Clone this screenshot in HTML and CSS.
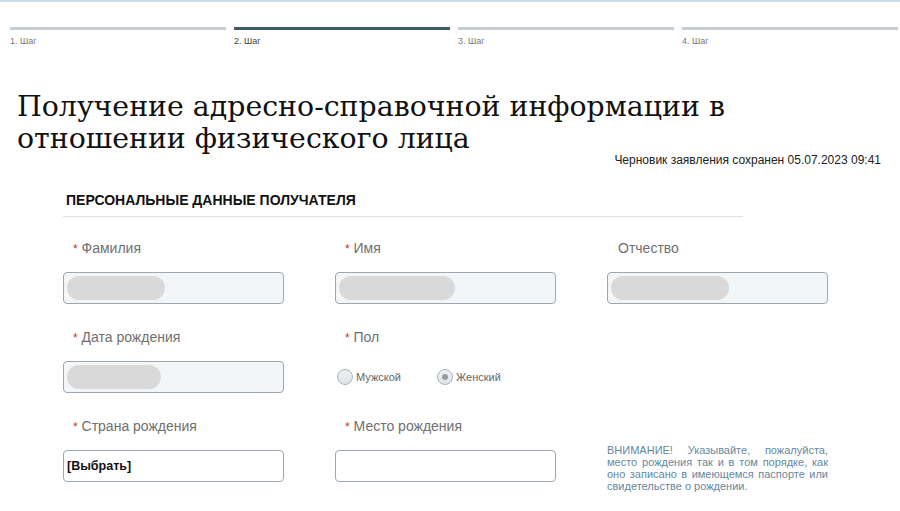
FILE: index.html
```html
<!DOCTYPE html>
<html lang="ru">
<head>
    <meta charset="UTF-8">
    <title>Получение адресно-справочной информации</title>
    <link rel="stylesheet" href="styles.css">
</head>
<body>

<div class="topline"></div>

<!-- Steps -->
<div class="steps">
    <div class="step">1. Шаг</div>
    <div class="step active">2. Шаг</div>
    <div class="step">3. Шаг</div>
    <div class="step">4. Шаг</div>
</div>

<h1 class="title">Получение адресно-справочной информации в отношении физического лица</h1>
<div class="draft">Черновик заявления сохранен 05.07.2023 09:41</div>

<div class="form">
    <div class="section-title">ПЕРСОНАЛЬНЫЕ ДАННЫЕ ПОЛУЧАТЕЛЯ</div>

    <div class="grid">
        <div class="field">
            <label><span class="req">*</span> Фамилия</label>
            <div class="input disabled"><span class="blur w98"></span></div>
        </div>
        <div class="field">
            <label><span class="req">*</span> Имя</label>
            <div class="input disabled"><span class="blur w116"></span></div>
        </div>
        <div class="field">
            <label class="plain">Отчество</label>
            <div class="input disabled"><span class="blur w118"></span></div>
        </div>

        <div class="field">
            <label><span class="req">*</span> Дата рождения</label>
            <div class="input disabled"><span class="blur w94"></span></div>
        </div>
        <div class="field">
            <label><span class="req">*</span> Пол</label>
            <div class="radios">
                <span class="radio"><span class="circle"></span>Мужской</span>
                <span class="radio"><span class="circle checked"></span>Женский</span>
            </div>
        </div>
        <div class="field"></div>

        <div class="field">
            <label><span class="req">*</span> Страна рождения</label>
            <div class="input"><span class="value">[Выбрать]</span></div>
        </div>
        <div class="field">
            <label><span class="req">*</span> Место рождения</label>
            <div class="input"></div>
        </div>
        <div class="field">
            <p class="note">ВНИМАНИЕ! Указывайте, пожалуйста, место рождения так и в том порядке, как оно записано в имеющемся паспорте или свидетельстве о рождении.</p>
        </div>
    </div>
</div>

</body>
</html>
```

FILE: styles.css
```css
body {
    margin: 0;
    background: #fff;
    font-family: "Liberation Sans", Arial, sans-serif;
    color: #222;
}

.topline {
    height: 2px;
    background-color: #cbdbe7;
}

.steps {
    display: flex;
    gap: 8px;
    margin-top: 25px;
    padding: 0 2px 0 10px;
}

.step {
    flex: 1;
    border-top: 3px solid #c3ced6;
    padding-top: 6px;
    font-size: 9px;
    line-height: 11px;
    color: #777;
}

.step.active {
    border-top-color: #3e5b67;
    color: #444;
}

.title {
    margin: 44px 0 0 17px;
    font-family: "DejaVu Serif", Georgia, serif;
    font-weight: normal;
    font-size: 28.4px;
    line-height: 32px;
    color: #111;
    max-width: 780px;
}

.draft {
    margin-top: -2px;
    padding-right: 19px;
    text-align: right;
    font-size: 12px;
    line-height: 14px;
    color: #222;
}

.form {
    padding-left: 63px;
}

.section-title {
    width: 677px;
    margin-top: 25px;
    padding: 0 0 8px 3px;
    border-bottom: 1px solid #dde2e6;
    font-size: 14px;
    line-height: 16px;
    font-weight: bold;
    color: #111;
}

.grid {
    display: grid;
    grid-template-columns: 221px 221px 221px;
    column-gap: 51px;
    row-gap: 25px;
    margin-top: 23px;
}

.field label {
    display: block;
    height: 16px;
    padding-left: 10px;
    font-size: 14px;
    line-height: 16px;
    color: #707070;
}

.field label.plain {
    padding-left: 11px;
}

.req {
    color: #c0392b;
    font-size: 12px;
    line-height: 0;
}

.input {
    box-sizing: border-box;
    height: 32px;
    margin-top: 16px;
    padding: 3px;
    border: 1px solid #9ca7b2;
    border-radius: 4px;
    background: #fff;
    display: flex;
    align-items: center;
}

.input.disabled {
    background-color: #f3f6f9;
}

.blur {
    display: block;
    height: 24px;
    border-radius: 12px;
    background-color: #d9d9d9;
}

.w94 { width: 94px; }
.w98 { width: 98px; }
.w116 { width: 116px; }
.w118 { width: 118px; }

.value {
    font-size: 12.5px;
    font-weight: bold;
    color: #111;
}

.radios {
    display: flex;
    align-items: center;
    height: 32px;
    margin-top: 16px;
    padding-left: 2px;
}

.radio {
    display: flex;
    align-items: center;
    width: 100px;
    font-size: 11px;
    color: #666;
}

.circle {
    box-sizing: border-box;
    width: 16px;
    height: 16px;
    margin-right: 3px;
    border: 1px solid #a9b3bd;
    border-radius: 50%;
    background: linear-gradient(#eef1f4, #dfe4e9);
    position: relative;
}

.circle.checked::after {
    content: "";
    position: absolute;
    left: 4px;
    top: 4px;
    width: 6px;
    height: 6px;
    border-radius: 50%;
    background-color: #9a9a9a;
}

.note {
    margin: 26px 0 0;
    font-size: 11px;
    line-height: 12px;
    text-align: justify;
    color: #6487a2;
}
```
